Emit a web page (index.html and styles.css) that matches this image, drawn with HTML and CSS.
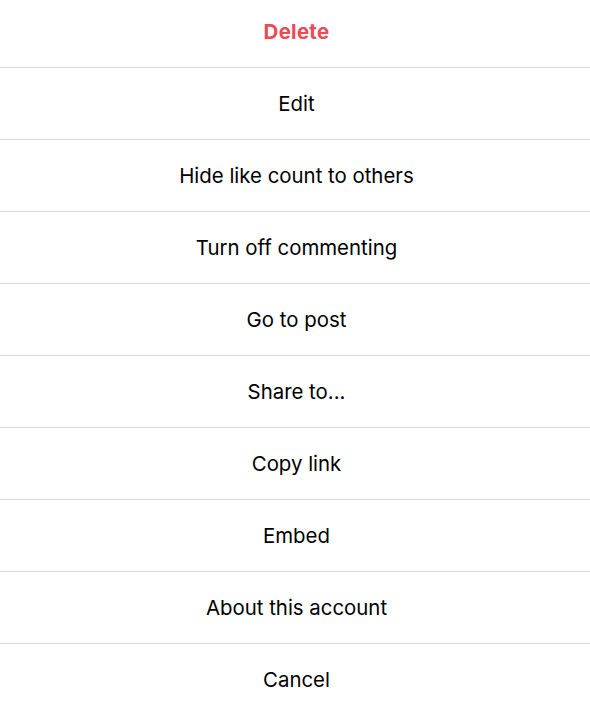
FILE: index.html
```html
<!DOCTYPE html>
<html>
<head>
<meta charset="utf-8">
<link rel="stylesheet" href="styles.css">
</head>
<body>
<div class="sheet">
  <button class="item danger">Delete</button>
  <button class="item">Edit</button>
  <button class="item">Hide like count to others</button>
  <button class="item">Turn off commenting</button>
  <button class="item">Go to post</button>
  <button class="item">Share to...</button>
  <button class="item">Copy link</button>
  <button class="item">Embed</button>
  <button class="item">About this account</button>
  <button class="item">Cancel</button>
</div>
</body>
</html>
```
FILE: styles.css
```css
html, body {
  margin: 0;
  padding: 0;
  background: #ffffff;
  overflow: hidden;
}
.sheet {
  display: flex;
  flex-direction: column;
  margin-top: -5px;
  background: #ffffff;
}
.item {
  display: flex;
  align-items: center;
  justify-content: center;
  height: 72px;
  box-sizing: border-box;
  border: 0;
  border-top: 1px solid #dbdbdb;
  background: #ffffff;
  padding: 0 0 0 3px;
  margin: 0;
  font-family: Inter, "Noto Sans", sans-serif;
  font-size: 20.4px;
  font-weight: 400;
  color: #000000;
}
.item:first-child {
  border-top: 0;
}
.danger {
  color: #ed4956;
  font-weight: 700;
  letter-spacing: 0.3px;
}
```
